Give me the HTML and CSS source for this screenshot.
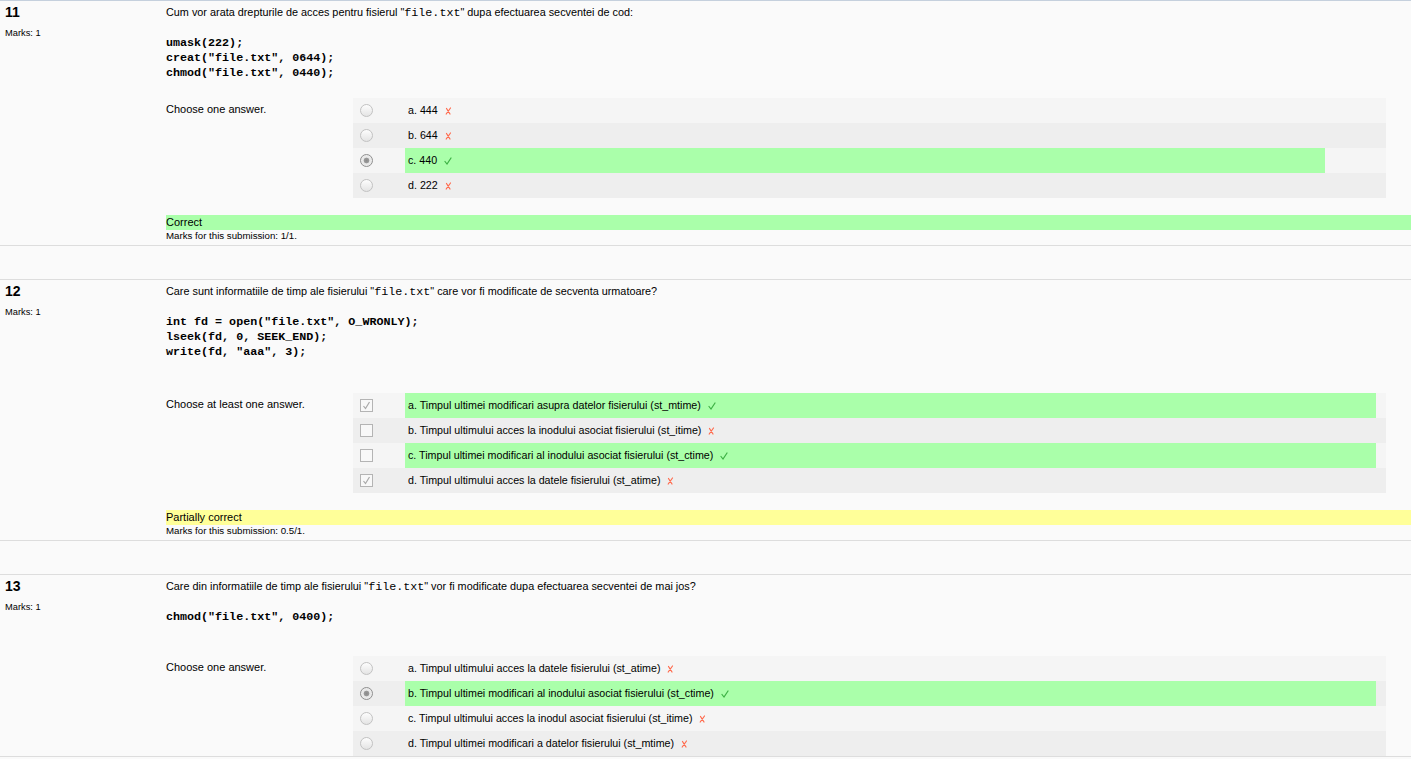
FILE: index.html
```html
<!DOCTYPE html>
<html lang="ro">
<head>
<meta charset="utf-8">
<title>Quiz review</title>
<link rel="stylesheet" href="styles.css">
</head>
<body>
<div class="que que--first">
  <div class="info">
    <div class="no">11</div>
    <div class="grade">Marks: 1</div>
  </div>
  <div class="content">
    <p class="qtext">Cum vor arata drepturile de acces pentru fisierul "<code>file.txt</code>" dupa efectuarea secventei de cod:</p>
    <pre class="code">umask(222);
creat("file.txt", 0644);
chmod("file.txt", 0440);</pre>
    <div class="ablock">
      <div class="prompt">Choose one answer.</div>
      <div class="answer answer--narrow">
        <div class="row r0"><div class="ctl"><span class="radio"></span></div><div class="lbl">a. 444 <svg class="ico" width="7" height="8" viewBox="0 0 7 8"><path d="M1.5 1.5 L5 7 M5.5 1 L1.2 7" stroke="#ff6a4d" stroke-width="1.2" fill="none" stroke-linecap="round"/></svg></div></div>
        <div class="row r1"><div class="ctl"><span class="radio"></span></div><div class="lbl">b. 644 <svg class="ico" width="7" height="8" viewBox="0 0 7 8"><path d="M1.5 1.5 L5 7 M5.5 1 L1.2 7" stroke="#ff6a4d" stroke-width="1.2" fill="none" stroke-linecap="round"/></svg></div></div>
        <div class="row r0"><div class="ctl"><span class="radio radio--on"></span></div><div class="lbl correct">c. 440 <svg class="ico" width="8" height="8" viewBox="0 0 8 8"><path d="M1 4.5 L3 7 L7 1" stroke="#3cb043" stroke-width="1.2" fill="none" stroke-linecap="round"/></svg></div></div>
        <div class="row r1"><div class="ctl"><span class="radio"></span></div><div class="lbl">d. 222 <svg class="ico" width="7" height="8" viewBox="0 0 7 8"><path d="M1.5 1.5 L5 7 M5.5 1 L1.2 7" stroke="#ff6a4d" stroke-width="1.2" fill="none" stroke-linecap="round"/></svg></div></div>
      </div>
    </div>
    <div class="result result--correct">Correct</div>
    <div class="marks">Marks for this submission: 1/1.</div>
  </div>
</div>

<div class="que">
  <div class="info">
    <div class="no">12</div>
    <div class="grade">Marks: 1</div>
  </div>
  <div class="content">
    <p class="qtext">Care sunt informatiile de timp ale fisierului "<code>file.txt</code>" care vor fi modificate de secventa urmatoare?</p>
    <pre class="code code--spaced">int fd = open("file.txt", O_WRONLY);
lseek(fd, 0, SEEK_END);
write(fd, "aaa", 3);</pre>
    <div class="ablock">
      <div class="prompt">Choose at least one answer.</div>
      <div class="answer">
        <div class="row r0"><div class="ctl"><span class="check check--on"><svg width="9" height="9" viewBox="0 0 9 9"><path d="M1.5 5 L3.5 7.5 L7.5 1" stroke="#a8a8a8" stroke-width="1.2" fill="none"/></svg></span></div><div class="lbl correct">a. Timpul ultimei modificari asupra datelor fisierului (st_mtime) <svg class="ico" width="8" height="8" viewBox="0 0 8 8"><path d="M1 4.5 L3 7 L7 1" stroke="#3cb043" stroke-width="1.2" fill="none" stroke-linecap="round"/></svg></div></div>
        <div class="row r1"><div class="ctl"><span class="check"></span></div><div class="lbl">b. Timpul ultimului acces la inodului asociat fisierului (st_itime) <svg class="ico" width="7" height="8" viewBox="0 0 7 8"><path d="M1.5 1.5 L5 7 M5.5 1 L1.2 7" stroke="#ff6a4d" stroke-width="1.2" fill="none" stroke-linecap="round"/></svg></div></div>
        <div class="row r0"><div class="ctl"><span class="check"></span></div><div class="lbl correct">c. Timpul ultimei modificari al inodului asociat fisierului (st_ctime) <svg class="ico" width="8" height="8" viewBox="0 0 8 8"><path d="M1 4.5 L3 7 L7 1" stroke="#3cb043" stroke-width="1.2" fill="none" stroke-linecap="round"/></svg></div></div>
        <div class="row r1"><div class="ctl"><span class="check check--on"><svg width="9" height="9" viewBox="0 0 9 9"><path d="M1.5 5 L3.5 7.5 L7.5 1" stroke="#a8a8a8" stroke-width="1.2" fill="none"/></svg></span></div><div class="lbl">d. Timpul ultimului acces la datele fisierului (st_atime) <svg class="ico" width="7" height="8" viewBox="0 0 7 8"><path d="M1.5 1.5 L5 7 M5.5 1 L1.2 7" stroke="#ff6a4d" stroke-width="1.2" fill="none" stroke-linecap="round"/></svg></div></div>
      </div>
    </div>
    <div class="result result--partial">Partially correct</div>
    <div class="marks">Marks for this submission: 0.5/1.</div>
  </div>
</div>

<div class="que">
  <div class="info">
    <div class="no">13</div>
    <div class="grade">Marks: 1</div>
  </div>
  <div class="content">
    <p class="qtext">Care din informatiile de timp ale fisierului "<code>file.txt</code>" vor fi modificate dupa efectuarea secventei de mai jos?</p>
    <pre class="code code--spaced-sm">chmod("file.txt", 0400);</pre>
    <div class="ablock">
      <div class="prompt">Choose one answer.</div>
      <div class="answer">
        <div class="row r0"><div class="ctl"><span class="radio"></span></div><div class="lbl">a. Timpul ultimului acces la datele fisierului (st_atime) <svg class="ico" width="7" height="8" viewBox="0 0 7 8"><path d="M1.5 1.5 L5 7 M5.5 1 L1.2 7" stroke="#ff6a4d" stroke-width="1.2" fill="none" stroke-linecap="round"/></svg></div></div>
        <div class="row r1"><div class="ctl"><span class="radio radio--on"></span></div><div class="lbl correct">b. Timpul ultimei modificari al inodului asociat fisierului (st_ctime) <svg class="ico" width="8" height="8" viewBox="0 0 8 8"><path d="M1 4.5 L3 7 L7 1" stroke="#3cb043" stroke-width="1.2" fill="none" stroke-linecap="round"/></svg></div></div>
        <div class="row r0"><div class="ctl"><span class="radio"></span></div><div class="lbl">c. Timpul ultimului acces la inodul asociat fisierului (st_itime) <svg class="ico" width="7" height="8" viewBox="0 0 7 8"><path d="M1.5 1.5 L5 7 M5.5 1 L1.2 7" stroke="#ff6a4d" stroke-width="1.2" fill="none" stroke-linecap="round"/></svg></div></div>
        <div class="row r1"><div class="ctl"><span class="radio"></span></div><div class="lbl">d. Timpul ultimei modificari a datelor fisierului (st_mtime) <svg class="ico" width="7" height="8" viewBox="0 0 7 8"><path d="M1.5 1.5 L5 7 M5.5 1 L1.2 7" stroke="#ff6a4d" stroke-width="1.2" fill="none" stroke-linecap="round"/></svg></div></div>
      </div>
    </div>
  </div>
</div>
</body>
</html>
```

FILE: styles.css
```css
html, body {
  margin: 0;
  padding: 0;
}
body {
  background: #fafafa;
  color: #000;
  font-family: "Liberation Sans", Arial, sans-serif;
  font-size: 11px;
  line-height: 15px;
}
.que {
  display: flex;
  border-top: 1px solid #dddddd;
  border-bottom: 1px solid #dddddd;
  margin-bottom: 33px;
}
.que--first {
  border-top-color: #c5d0dd;
}
.info {
  width: 161px;
  flex: none;
  padding: 3px 0 0 5px;
}
.no {
  font-weight: bold;
  font-size: 14px;
  line-height: 16px;
}
.grade {
  font-size: 9.3px;
  line-height: 12px;
  margin-top: 7px;
}
.content {
  flex: 1;
  min-width: 0;
  padding-top: 4px;
}
.qtext {
  margin: 0;
  font-size: 10.85px;
}
.qtext code {
  font-family: "Liberation Mono", "Courier New", monospace;
  font-size: 11.7px;
}
.code {
  margin: 15px 0 0;
  font-family: "Liberation Mono", "Courier New", monospace;
  font-weight: bold;
  font-size: 11.7px;
  line-height: 15px;
}
.code--spaced {
  padding-bottom: 16px;
}
.code--spaced-sm {
  padding-bottom: 14px;
}
.ablock {
  display: flex;
  margin-top: 17px;
  margin-right: 25px;
}
.prompt {
  width: 187px;
  flex: none;
  padding-top: 4px;
}
.answer {
  flex: 1;
  display: grid;
  grid-template-columns: 52px 971px 1fr;
}
.answer--narrow {
  grid-template-columns: 52px 920px 1fr;
}
.row {
  display: contents;
}
.row .ctl,
.row .lbl,
.row::after {
  height: 25px;
}
.row::after {
  content: "";
}
.r0 .ctl, .r0 .lbl, .r0::after { background: #f5f5f5; }
.r1 .ctl, .r1 .lbl, .r1::after { background: #eeeeee; }
.ctl {
  display: flex;
  align-items: center;
  padding-left: 7px;
}
.lbl {
  display: flex;
  align-items: center;
  padding-left: 3px;
  white-space: pre;
  font-size: 10.7px;
}
.row .lbl.correct {
  background: #aaffaa;
}
.ico {
  margin-left: 4px;
  flex: none;
}
.radio {
  display: block;
  box-sizing: border-box;
  width: 13px;
  height: 13px;
  border-radius: 50%;
  border: 1px solid #c2c2c2;
  background: linear-gradient(#fdfdfd, #e4e4e4);
}
.radio--on {
  border-color: #8f8f8f;
  background: radial-gradient(circle, #8a8a8a 0, #9a9a9a 2.5px, #e6e6e6 3.2px, #f2f2f2 100%);
}
.check {
  display: flex;
  align-items: center;
  justify-content: center;
  box-sizing: border-box;
  width: 13px;
  height: 13px;
  border: 1px solid #b4b4b4;
  background: #f8f8f8;
}
.result {
  margin-top: 17px;
  height: 15px;
  line-height: 15px;
}
.result--correct { background: #aaffaa; }
.result--partial { background: #ffff99; }
.marks {
  font-size: 9.7px;
  line-height: 12px;
  padding-bottom: 3px;
}
```
